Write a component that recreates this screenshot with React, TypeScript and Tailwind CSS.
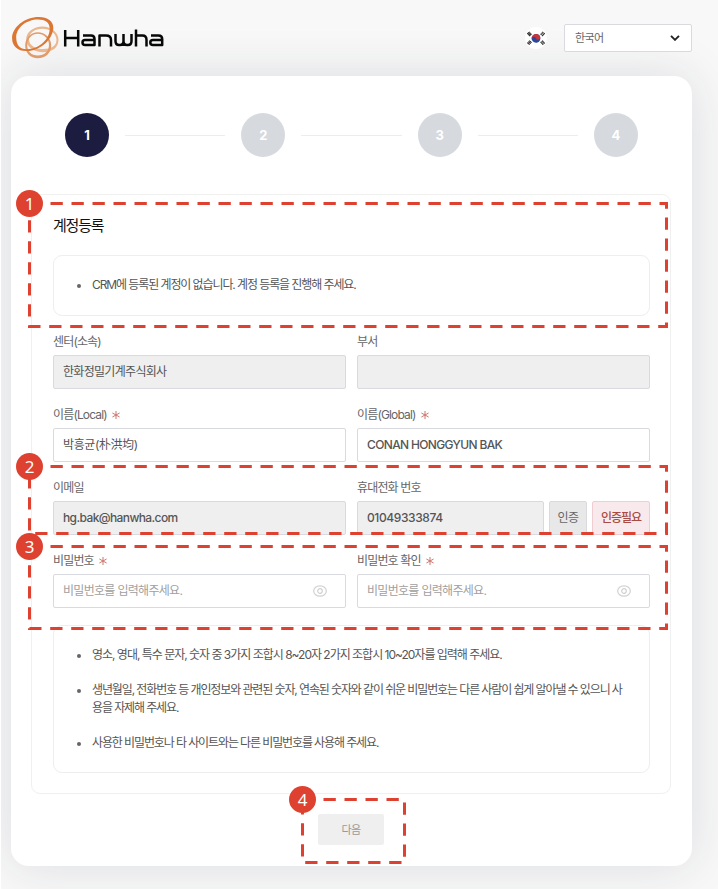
import React from "react";

function Logo() {
  return (
    <div className="flex h-[44px] w-[153px] items-center">
      <svg viewBox="0 0 48 44" className="h-[44px] w-[48px] shrink-0" fill="none">
        <path
          fillRule="evenodd"
          fill="#ecb78c"
          d="M30.5 10.500C38.5 10.500 46.500 16 46.500 24C46.500 31.500 40 36.200 31.500 36.200C22 36.200 14.200 31 14.200 23.500C14.200 16 21.500 10.500 30.500 10.500ZM30.500 12.800C23 12.800 17 16.500 17 23.200C17 29.500 23.500 33 31.500 33C39 33 44.500 30 44.500 24C44.500 17.500 38 12.800 30.500 12.800Z"
        />
        <path
          fillRule="evenodd"
          fill="#e39a6b"
          d="M25.800 16.200C33 16.200 39.200 22 39.200 29.500C39.200 37 33.500 42.200 25.800 42.200C18.500 42.200 13.200 37 13.200 29.500C13.200 22 19 16.200 25.800 16.200ZM25.800 17.800C20 17.800 15.200 22.500 15.200 29C15.200 35.500 19.500 39.500 25.800 39.500C32 39.500 37 35.500 37 29C37 22.500 31.500 17.800 25.800 17.800Z"
        />
        <path
          fillRule="evenodd"
          fill="#dc7633"
          d="M27 1.100C35.500 1.100 41.500 5.500 41.300 12C41 22 30 34.700 14.500 35.100C6 35.300 0.100 30 0.100 22.500C0.100 11.500 12.500 1.100 27 1.100ZM26 3.500C14.500 3.500 4.200 11.500 4.200 21.500C4.200 29 8 33.500 15 33.300C28.500 33 37.900 22 37.700 12.500C37.600 6.500 33.500 3.500 26 3.500Z"
        />
      </svg>
      <svg viewBox="0 0 101 20" className="mt-[-1px] ml-[3px] h-[20px] w-[101px]" fill="none" stroke="#080808" strokeWidth="2.500" strokeLinejoin="round" role="img" aria-label="Hanwha">
        <path d="M2.200 2V18.500M15.200 2V18.500M2 10H15" />
        <path d="M20 7.500H28Q31.500 7.500 31.500 11V17H22Q19.500 17 19.500 14.500Q19.500 12 22 12H31" />
        <path d="M36.500 18.500V7.500H43Q48 7.500 48 12V18.500" />
        <path d="M52.500 6V13Q52.500 17 56 17H57Q60.500 17 60.500 13V6M60.500 13Q60.500 17 64 17H65Q68.500 17 68.500 13V6" />
        <path d="M73 1.500V18.500M73 7.500H79.500Q83.500 7.500 83.500 12V18.500" />
        <path d="M88 7.500H95.500Q99.200 7.500 99.200 11V17H90Q87.300 17 87.300 14.500Q87.300 12 90 12H99" />
      </svg>
    </div>
  );
}

function KoreanFlag() {
  return (
    <svg viewBox="0 0 22 22" className="size-[22px]">
      <circle cx="11" cy="11" r="11" fill="#fff" />
      <g transform="rotate(-20 11 11.300)">
        <circle cx="11" cy="11.300" r="4.400" fill="#2b489d" />
        <path d="M6.600 11.300A4.400 4.400 0 0 1 15.400 11.300A2.200 2.200 0 0 1 11 11.300A2.200 2.200 0 0 0 6.600 11.300" fill="#c9353b" />
      </g>
      <g stroke="#292929" strokeWidth="1.100">
        <path d="M2.200 7L4.700 4.900M3.200 8L5.700 5.900M4.100 9L6.600 6.900" />
        <path d="M17.300 4.900L19.800 7M16.400 5.900L18.900 8M15.500 6.900L18 9" strokeDasharray="1.500 .400" />
        <path d="M2.200 15.600L4.700 17.700M3.200 14.600L5.700 16.700M4.100 13.600L6.600 15.700" />
        <path d="M17.300 17.700L19.800 15.600M16.400 16.700L18.900 14.600M15.500 15.700L18 13.600" strokeDasharray="1.500 .400" />
      </g>
    </svg>
  );
}

function Label({ text, required }: { text: string; required?: boolean }) {
  return (
    <div className="flex h-[28px] items-center gap-[5px] pt-px text-[#666]">
      <span className="tracking-[-0.85px] whitespace-nowrap">{text}</span>
      {required && (
        <svg viewBox="0 0 8 8" className="mt-px size-[8px]" stroke="#cb766c" strokeWidth="1">
          <path d="M4 0V8M.4 2L7.600 6M7.600 2L.4 6" />
        </svg>
      )}
    </div>
  );
}

function Field({ value, disabled, placeholder, spacing }: { value: string; disabled?: boolean; placeholder?: boolean; spacing?: string }) {
  return (
    <div
      className={
        "flex h-[34px] min-w-0 flex-1 items-center justify-between rounded-[2px] border border-[#d8dadf] pr-[18px] pl-[9px] " +
        (disabled ? "bg-[#efefef] " : "bg-white ") +
        (placeholder ? "text-[#a0a0a0]" : "text-[#555]")
      }
    >
      <span className={"whitespace-nowrap " + (spacing ?? "tracking-[-0.7px]")}>{value}</span>
      {placeholder && (
        <svg viewBox="0 0 14 12" className="h-[12px] w-[14px]" fill="none" stroke="#d2d2d2" strokeWidth="1.200">
          <ellipse cx="7" cy="6" rx="6.300" ry="5.200" />
          <circle cx="7" cy="6" r="2.300" />
        </svg>
      )}
    </div>
  );
}

function Bullet({ children, spacing }: { children: React.ReactNode; spacing: string }) {
  return (
    <li className="flex">
      <span className="mt-[8px] mr-[11px] size-[4px] shrink-0 rounded-full bg-[#666]" />
      <span className={"whitespace-nowrap " + spacing}>{children}</span>
    </li>
  );
}

const frames = [
  { x: 29.5, y: 203.5, w: 637, h: 123 },
  { x: 29.5, y: 466.5, w: 637, h: 67 },
  { x: 29.5, y: 546.5, w: 637, h: 82 },
  { x: 302.5, y: 799.5, w: 102, h: 63 },
];

function Annotations() {
  return (
    <svg className="pointer-events-none absolute top-0 left-0 h-[889px] w-[718px]" viewBox="0 0 718 889">
      {frames.map((f, i) => (
        <g key={i}>
          <rect x={f.x} y={f.y} width={f.w} height={f.h} fill="none" stroke="#de4130" strokeWidth="3" strokeDasharray="12.300 8.700" />
          <circle cx={f.x} cy={f.y} r="13.500" fill="#de4130" />
          <text x={f.x} y={f.y + 6.200} textAnchor="middle" fill="#fff" fontSize="17" fontFamily="Noto Sans, sans-serif">
            {i + 1}
          </text>
        </g>
      ))}
    </svg>
  );
}

export default function App() {
  return (
    <div className="relative h-[889px] w-[718px] overflow-hidden border-l border-white bg-[#f8f8f8] font-['Inter','Noto_Sans_CJK_KR',sans-serif] text-[12px] leading-[18px]">
      <header className="flex h-[76px] items-center pr-[26px] pl-[11px]">
        <Logo />
        <div className="ml-auto flex items-center gap-[17px]">
          <KoreanFlag />
          <div className="flex h-[28px] w-[128px] items-center justify-between rounded-[2px] border border-[#d8dadf] bg-white pr-[11px] pl-[10px] text-[11px] text-[#666]">
            <span className="tracking-[-0.6px]">한국어</span>
            <svg viewBox="0 0 10 6" className="h-[6px] w-[10px]" fill="none" stroke="#222" strokeWidth="1.900">
              <path d="M1 .8L5 4.800L9 .8" />
            </svg>
          </div>
        </div>
      </header>

      <main className="ml-[10px] flex h-[790px] w-[681px] flex-col rounded-[18px] bg-white pr-[21px] pl-[20px] shadow-[0_0_50px_rgba(30,40,70,0.13)]">
        <div className="flex items-center pt-[37px] pr-[33px] pl-[34px]">
          {[1, 2, 3, 4].map((n) => (
            <React.Fragment key={n}>
              {n > 1 && <div className="mx-[16px] h-px flex-1 bg-[#ededef]" />}
              <div
                className={
                  "flex size-[44px] items-center justify-center rounded-full text-[13px] font-bold text-white " +
                  (n === 1 ? "bg-[#1c1c40]" : "bg-[#d6d9de]")
                }
              >
                {n}
              </div>
            </React.Fragment>
          ))}
        </div>

        <section className="mt-[37px] h-[600px] rounded-[9px] border border-[#f0f0f0] pt-[20px] pr-[20px] pl-[21px]">
          <h1 className="h-[22px] text-[15px] leading-[22px] tracking-[-1.2px] text-[#111]">계정등록</h1>
          <ul className="mt-[18px] flex h-[61px] items-center rounded-[9px] border border-[#eee] pb-px pl-[23px] text-[#555]">
            <Bullet spacing="tracking-[-1.09px]">CRM에 등록된 계정이 없습니다. 계정 등록을 진행해 주세요.</Bullet>
          </ul>

          <div className="mt-[11px] grid grid-cols-[293px_293px] gap-x-[11px] gap-y-[11px]">
            <div>
              <Label text="센터(소속)" />
              <div className="flex"><Field value="한화정밀기계주식회사" disabled /></div>
            </div>
            <div>
              <Label text="부서" />
              <div className="flex"><Field value="" disabled /></div>
            </div>
            <div>
              <Label text="이름(Local)" required />
              <div className="flex"><Field value="박흥균(朴洪均)" spacing="tracking-[-0.4px]" /></div>
            </div>
            <div>
              <Label text="이름(Global)" required />
              <div className="flex"><Field value="CONAN HONGGYUN BAK" spacing="tracking-[-0.65px] font-medium" /></div>
            </div>
            <div>
              <Label text="이메일" />
              <div className="flex"><Field value="hg.bak@hanwha.com" disabled spacing="tracking-[-0.6px] font-medium" /></div>
            </div>
            <div>
              <Label text="휴대전화 번호" />
              <div className="flex gap-[5px]">
                <Field value="01049333874" disabled spacing="tracking-[-0.4px] font-medium" />
                <div className="flex h-[34px] w-[38px] items-center justify-center rounded-[2px] border border-[#d8dadf] bg-[#e8e8e8] tracking-[-0.6px] text-[#666]">인증</div>
                <div className="flex h-[34px] w-[58px] items-center justify-center rounded-[2px] border border-[#f0cdd0] bg-[#f8eaec] font-medium tracking-[-1px] text-[#a84c43]">인증필요</div>
              </div>
            </div>
            <div>
              <Label text="비밀번호" required />
              <div className="flex"><Field value="비밀번호를 입력해주세요." placeholder /></div>
            </div>
            <div>
              <Label text="비밀번호 확인" required />
              <div className="flex"><Field value="비밀번호를 입력해주세요." placeholder /></div>
            </div>
          </div>

          <ul className="mt-[17px] flex h-[148px] flex-col gap-[17px] rounded-[9px] border border-[#eee] pt-[20px] pl-[23px] text-[#555]">
            <Bullet spacing="tracking-[-1.01px]">영소, 영대, 특수 문자, 숫자 중 3가지 조합시 8~20자 2가지 조합시 10~20자를 입력해 주세요.</Bullet>
            <Bullet spacing="tracking-[-1.11px]">
              생년월일, 전화번호 등 개인정보와 관련된 숫자, 연속된 숫자와 같이 쉬운 비밀번호는 다른 사람이 쉽게 알아낼 수 있으니 사<br />용을 자제해 주세요.
            </Bullet>
            <Bullet spacing="tracking-[-1.11px]">사용한 비밀번호나 타 사이트와는 다른 비밀번호를 사용해 주세요.</Bullet>
          </ul>
        </section>

        <button className="mt-[20px] h-[31px] w-[66px] self-center rounded-[2px] bg-[#efefef] text-[11px] tracking-[-0.6px] text-[#999]">다음</button>
      </main>

      <div className="absolute top-0 left-[-1px]">
        <Annotations />
      </div>
    </div>
  );
}
